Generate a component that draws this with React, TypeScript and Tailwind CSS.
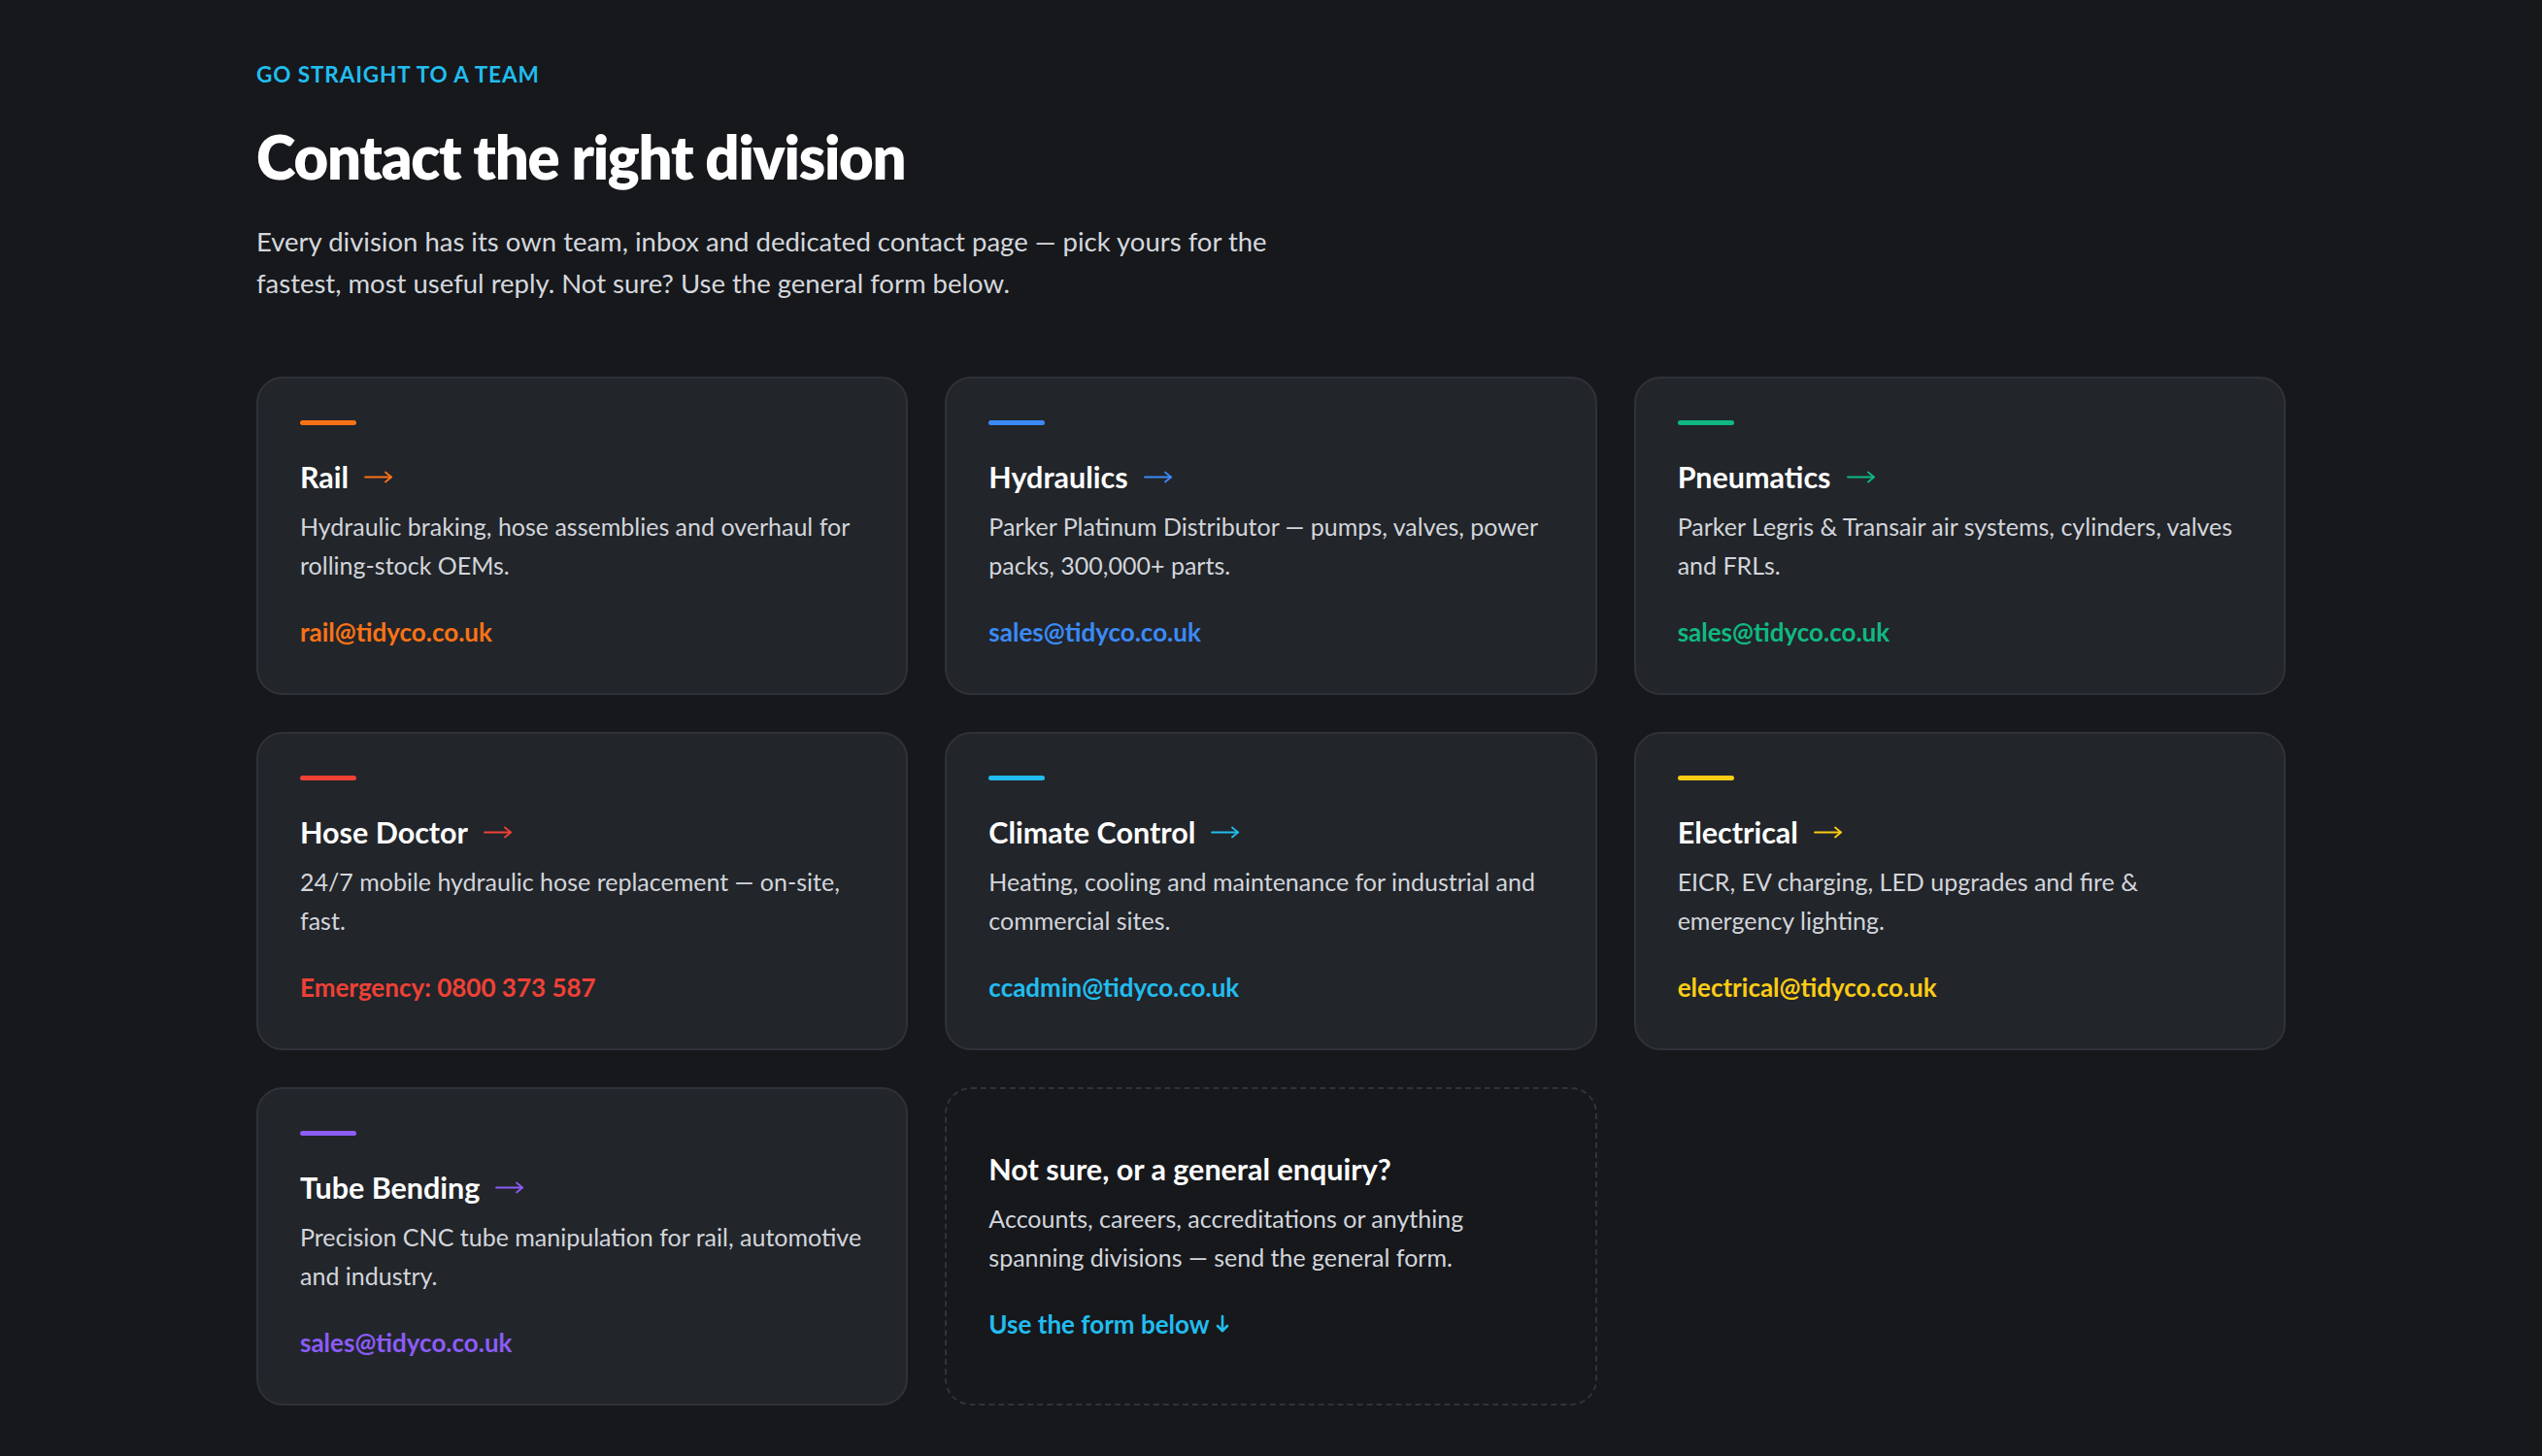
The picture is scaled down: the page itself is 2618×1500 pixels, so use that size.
import React from "react";

type Division = {
  name: string;
  blurb: string;
  contact: string;
  bar: string;
  text: string;
  stroke: string;
};

const divisions: Division[] = [
  {
    name: "Rail",
    blurb: "Hydraulic braking, hose assemblies and overhaul for rolling-stock OEMs.",
    contact: "rail@tidyco.co.uk",
    bar: "bg-[#f97316]",
    text: "text-[#f97316]",
    stroke: "#f97316",
  },
  {
    name: "Hydraulics",
    blurb: "Parker Platinum Distributor — pumps, valves, power packs, 300,000+ parts.",
    contact: "sales@tidyco.co.uk",
    bar: "bg-[#3b8af6]",
    text: "text-[#3b8af6]",
    stroke: "#3b8af6",
  },
  {
    name: "Pneumatics",
    blurb: "Parker Legris & Transair air systems, cylinders, valves and FRLs.",
    contact: "sales@tidyco.co.uk",
    bar: "bg-[#10b981]",
    text: "text-[#10b981]",
    stroke: "#10b981",
  },
  {
    name: "Hose Doctor",
    blurb: "24/7 mobile hydraulic hose replacement — on-site, fast.",
    contact: "Emergency: 0800 373 587",
    bar: "bg-[#ef4136]",
    text: "text-[#ef4136]",
    stroke: "#ef4136",
  },
  {
    name: "Climate Control",
    blurb: "Heating, cooling and maintenance for industrial and commercial sites.",
    contact: "ccadmin@tidyco.co.uk",
    bar: "bg-[#22bdef]",
    text: "text-[#22bdef]",
    stroke: "#22bdef",
  },
  {
    name: "Electrical",
    blurb: "EICR, EV charging, LED upgrades and fire & emergency lighting.",
    contact: "electrical@tidyco.co.uk",
    bar: "bg-[#facc15]",
    text: "text-[#facc15]",
    stroke: "#facc15",
  },
  {
    name: "Tube Bending",
    blurb: "Precision CNC tube manipulation for rail, automotive and industry.",
    contact: "sales@tidyco.co.uk",
    bar: "bg-[#8b5cf6]",
    text: "text-[#8b5cf6]",
    stroke: "#8b5cf6",
  },
];

const font = { fontFamily: "Lato, 'Noto Sans', sans-serif" };

function RightArrow({ color }: { color: string }) {
  return (
    <svg width="30" height="14" viewBox="0 0 30 14" fill="none" className="shrink-0">
      <path d="M1 7.5H28" stroke={color} strokeWidth="1.8" strokeLinecap="round" />
      <path d="M22 2.5L28 7.5L22 12.5" stroke={color} strokeWidth="1.8" strokeLinecap="round" strokeLinejoin="round" />
    </svg>
  );
}

function DownArrow() {
  return (
    <svg width="14" height="20" viewBox="0 0 14 20" fill="none" className="shrink-0">
      <path d="M7 2V17" stroke="#22bdef" strokeWidth="2.6" strokeLinecap="round" />
      <path d="M2 12L7 17L12 12" stroke="#22bdef" strokeWidth="2.6" strokeLinecap="round" strokeLinejoin="round" />
    </svg>
  );
}

function DivisionCard({ d }: { d: Division }) {
  return (
    <a
      href="#"
      className="flex flex-col rounded-[27px] border-2 border-[#2f3238] bg-[#22252a] p-[43px]"
    >
      <div className={`h-[5px] w-[58px] rounded-full ${d.bar}`} />
      <div className="mt-[33px] flex h-[40px] items-center gap-[16px]">
        <span className="text-[30.5px] font-bold leading-[40px] text-white">{d.name}</span>
        <RightArrow color={d.stroke} />
      </div>
      <p className="mt-[11px] text-[25px] leading-[40px] text-[#d2d5db]">{d.blurb}</p>
      <span className={`mt-[29px] text-[26px] font-bold leading-[40px] ${d.text}`}>{d.contact}</span>
    </a>
  );
}

export default function App() {
  return (
    <div className="min-h-screen w-full bg-[#16181c]" style={font}>
      <section className="mx-auto max-w-[2090px] pb-[96px] pt-[61px]">
        <p className="text-[22.5px] font-bold uppercase leading-[32px] tracking-[0.04em] text-[#22bdef]">
          Go straight to a team
        </p>
        <h2 className="mt-[34px] text-[61.5px] font-extrabold leading-[69px] tracking-[-0.02em] text-white">
          Contact the right division
        </h2>
        <p className="mt-[31px] max-w-[1100px] text-[27.5px] leading-[43px] text-[#d5d7dc]">
          Every division has its own team, inbox and dedicated contact page — pick yours for the fastest, most useful
          reply. Not sure? Use the general form below.
        </p>

        <div className="mt-[75px] grid grid-cols-3 gap-x-[38px] gap-y-[38px]">
          {divisions.map((d) => (
            <DivisionCard key={d.name} d={d} />
          ))}

          <div className="flex flex-col justify-center rounded-[27px] border-2 border-dashed border-[#30333a] px-[43px] py-[43px]">
            <h3 className="text-[30.5px] font-bold leading-[40px] text-white">Not sure, or a general enquiry?</h3>
            <p className="mt-[11px] max-w-[520px] text-[25px] leading-[40px] text-[#d2d5db]">
              Accounts, careers, accreditations or anything spanning divisions — send the general form.
            </p>
            <a href="#" className="mt-[29px] flex h-[40px] items-center gap-[6px] text-[26px] font-bold text-[#22bdef]">
              Use the form below
              <DownArrow />
            </a>
          </div>
        </div>
      </section>
    </div>
  );
}
